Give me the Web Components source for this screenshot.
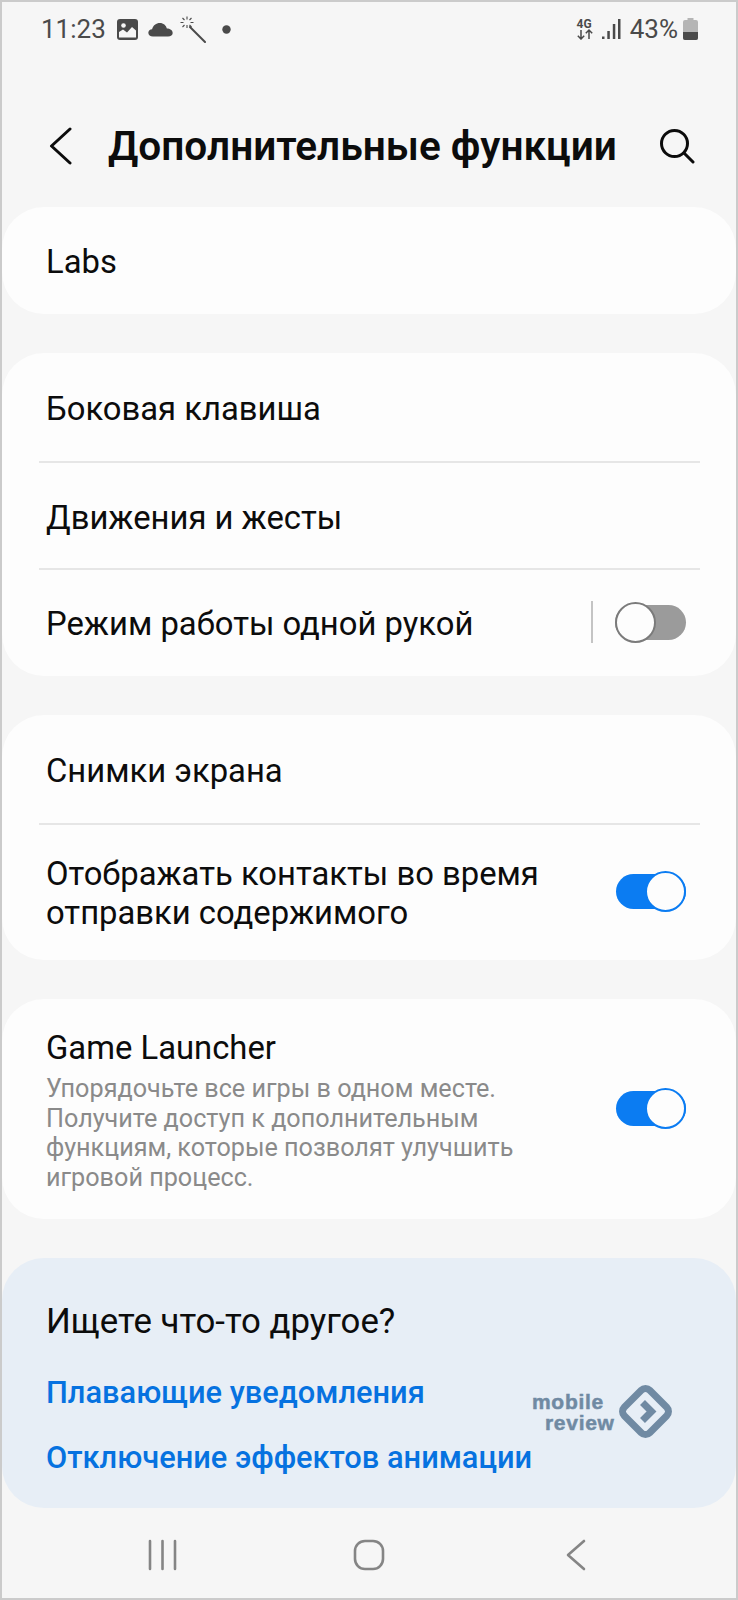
<!DOCTYPE html>
<html lang="ru">
<head>
<meta charset="utf-8">
<title>Дополнительные функции</title>
<style>
  html, body { margin: 0; padding: 0; background: #f6f6f6; }
  body { font-family: Roboto, "Noto Sans", sans-serif; }
</style>
</head>
<body>
<phone-screen>
  <status-bar></status-bar>
  <app-header title="Дополнительные функции"></app-header>
  <settings-card style="margin-top:0">
    <setting-row label="Labs" height="107"></setting-row>
  </settings-card>
  <settings-card>
    <setting-row label="Боковая клавиша" height="110" divider></setting-row>
    <setting-row label="Движения и жесты" height="107" divider></setting-row>
    <setting-row label="Режим работы одной рукой" height="106" toggle="off" split></setting-row>
  </settings-card>
  <settings-card>
    <setting-row label="Снимки экрана" height="110" divider></setting-row>
    <setting-row label="Отображать контакты во время<br>отправки содержимого" height="135" toggle="on"></setting-row>
  </settings-card>
  <settings-card>
    <setting-row label="Game Launcher" height="220" toggle="on"
      sub="Упорядочьте все игры в одном месте.<br>Получите доступ к дополнительным<br>функциям, которые позволят улучшить<br>игровой процесс."></setting-row>
  </settings-card>
  <suggest-card></suggest-card>
  <nav-bar></nav-bar>
</phone-screen>

<script>
class PhoneScreen extends HTMLElement {
    connectedCallback() {
        this.attachShadow({ mode: 'open' });
        this.shadowRoot.innerHTML = `
            <style>
                :host {
                    display: flex;
                    flex-direction: column;
                    box-sizing: border-box;
                    width: 738px;
                    height: 1600px;
                    border: 2px solid #cbcbcb;
                    background: #f6f6f6;
                    overflow: hidden;
                }
            </style>
            <slot></slot>
        `;
    }
}

class StatusBar extends HTMLElement {
    connectedCallback() {
        this.attachShadow({ mode: 'open' });
        this.shadowRoot.innerHTML = `
            <style>
                :host {
                    display: flex;
                    align-items: center;
                    justify-content: space-between;
                    height: 54px;
                    padding: 0 38px 0 39px;
                    color: #4a4a4a;
                    font-size: 26px;
                }
                .side { display: flex; align-items: center; }
                svg { display: block; }
            </style>
            <div class="side">
                <span>11:23</span>
                <svg style="margin-left:11px" width="21" height="21" viewBox="0 0 21 21">
                    <rect x="0" y="0" width="21" height="21" rx="3" fill="#4a4a4a"/>
                    <path d="M2 18.500V13l4-2.500 4 3 5-5.500 4 3.500v7z" fill="#f6f6f6"/>
                    <circle cx="6.500" cy="6.500" r="2.300" fill="#f6f6f6"/>
                </svg>
                <svg style="margin-left:10px" width="25" height="15" viewBox="0 0 26 16">
                    <path d="M5 15.500C2 15.500 0 13.800 0 11.500 0 9.300 1.800 7.800 4 7.700 5 3.500 8.500 1 12.300 1c3.800 0 6.700 2.500 7.500 6 3.200 0 6.200 1.800 6.200 4.700 0 2.300-2 3.800-5 3.800z" fill="#4a4a4a"/>
                </svg>
                <svg style="margin-left:6px" width="27" height="27" viewBox="0 0 27 27" stroke="#4a4a4a" fill="none">
                    <path d="M11 11l15 15" stroke-width="2" stroke-linecap="round"/>
                    <path d="M8 .5v3M8 9v3M1.500 6.500h3M11.500 6.500h3M3.500 2l2 2M10.500 9l2 2M3.500 11l2-2M10.500 4l2-2" stroke-width="1.100"/>
                </svg>
                <svg style="margin-left:16px" width="9" height="9" viewBox="0 0 9 9"><circle cx="4.500" cy="4.500" r="4.200" fill="#4a4a4a"/></svg>
            </div>
            <div class="side">
                <svg width="18" height="22" viewBox="0 0 18 22" fill="none" stroke="#4a4a4a">
                    <text x="0.500" y="9.500" font-family="Roboto" font-size="12" font-weight="700" fill="#4a4a4a" stroke="none">4G</text>
                    <path d="M5 12v9M1.800 17.800L5 21l3.200-3.200M13 21v-9M9.800 15.200L13 12l3.200 3.200" stroke-width="1.500"/>
                </svg>
                <svg style="margin-left:8px" width="19" height="20" viewBox="0 0 19 20" fill="#4a4a4a">
                    <rect x="0" y="17.500" width="2.500" height="2.500"/>
                    <rect x="5.300" y="12" width="2.500" height="8"/>
                    <rect x="10.800" y="5" width="2.500" height="15"/>
                    <rect x="16" y="0" width="2.500" height="20"/>
                </svg>
                <span style="margin-left:9px">43%</span>
                <svg style="margin-left:5px" width="15" height="22" viewBox="0 0 15 22">
                    <path d="M4.500 0h6v2h2.500a2 2 0 0 1 2 2v16a2 2 0 0 1-2 2H2a2 2 0 0 1-2-2V4a2 2 0 0 1 2-2h2.500z" fill="#b5b5b5"/>
                    <path d="M0 14h15v6a2 2 0 0 1-2 2H2a2 2 0 0 1-2-2z" fill="#4a4a4a"/>
                </svg>
            </div>
        `;
    }
}

class AppHeader extends HTMLElement {
    connectedCallback() {
        this.attachShadow({ mode: 'open' });
        this.shadowRoot.innerHTML = `
            <style>
                :host {
                    display: flex;
                    align-items: center;
                    box-sizing: border-box;
                    height: 151px;
                    padding: 29px 0 0 46px;
                    color: #0c0c0c;
                }
                h1 {
                    margin: 0 0 0 36px;
                    font-size: 40.600px;
                    font-weight: 600;
                    white-space: nowrap;
                }
                svg { display: block; flex: none; }
                .search { margin-left: 42px; }
            </style>
            <svg width="24" height="38" viewBox="0 0 24 38" fill="none" stroke="#0c0c0c" stroke-width="3" stroke-linecap="round" stroke-linejoin="round">
                <path d="M22 2L3.500 19 22 36"/>
            </svg>
            <h1>${this.getAttribute('title')}</h1>
            <svg class="search" width="36" height="36" viewBox="0 0 36 36" fill="none" stroke="#0c0c0c" stroke-width="3" stroke-linecap="round">
                <circle cx="15.500" cy="15.500" r="13"/>
                <path d="M25 25l9 9"/>
            </svg>
        `;
    }
}

class SettingsCard extends HTMLElement {
    connectedCallback() {
        this.attachShadow({ mode: 'open' });
        this.shadowRoot.innerHTML = `
            <style>
                :host {
                    display: block;
                    margin-top: 39px;
                    background: #fdfdfd;
                    border-radius: 42px;
                    overflow: hidden;
                }
            </style>
            <slot></slot>
        `;
    }
}

class SettingRow extends HTMLElement {
    connectedCallback() {
        const sub = this.getAttribute('sub');
        const toggle = this.getAttribute('toggle');
        this.attachShadow({ mode: 'open' });
        this.shadowRoot.innerHTML = `
            <style>
                :host {
                    display: flex;
                    align-items: center;
                    position: relative;
                    box-sizing: border-box;
                    height: ${this.getAttribute('height')}px;
                    padding: 0 50px 0 44px;
                    color: #0c0c0c;
                }
                :host([divider])::after {
                    content: '';
                    position: absolute;
                    left: 37px;
                    right: 36px;
                    bottom: 0;
                    height: 2px;
                    background: #e6e6e6;
                }
                .text { flex: 1; min-width: 0; padding-top: 3px; }
                .label { font-size: 32.800px; line-height: 39px; white-space: nowrap; }
                .sub { margin-top: 6px; font-size: 25.200px; line-height: 29.500px; color: #8a8a8a; white-space: nowrap; }
                .split { width: 2px; height: 42px; background: #c4c4c4; margin: 0 22px 2px 0; }
                toggle-switch { margin-bottom: 2px; }
            </style>
            <div class="text">
                <div class="label">${this.getAttribute('label')}</div>
                ${sub ? `<div class="sub">${sub}</div>` : ''}
            </div>
            ${this.hasAttribute('split') ? '<div class="split"></div>' : ''}
            ${toggle ? `<toggle-switch state="${toggle}"></toggle-switch>` : ''}
        `;
    }
}

class ToggleSwitch extends HTMLElement {
    connectedCallback() {
        const on = this.getAttribute('state') === 'on';
        this.attachShadow({ mode: 'open' });
        this.shadowRoot.innerHTML = `
            <style>
                :host {
                    display: flex;
                    align-items: center;
                    justify-content: ${on ? 'flex-end' : 'flex-start'};
                    box-sizing: border-box;
                    width: ${on ? 70 : 71}px;
                    height: 35px;
                    border-radius: 18px;
                    background: ${on ? '#0b7cf2' : '#9b9b9b'};
                }
                .thumb {
                    box-sizing: border-box;
                    width: 41px;
                    height: 41px;
                    margin: -3px 0;
                    border-radius: 50%;
                    background: #fdfdfd;
                    border: 2px solid ${on ? '#0b7cf2' : '#7b7b7b'};
                }
            </style>
            <div class="thumb"></div>
        `;
    }
}

class SuggestCard extends HTMLElement {
    connectedCallback() {
        this.attachShadow({ mode: 'open' });
        this.shadowRoot.innerHTML = `
            <style>
                :host {
                    display: block;
                    position: relative;
                    box-sizing: border-box;
                    height: 250px;
                    margin-top: 39px;
                    padding: 43px 44px 0;
                    background: #e7eef6;
                    border-radius: 42px;
                    color: #0c0c0c;
                }
                .head { font-size: 34.800px; line-height: 40px; }
                a {
                    display: block;
                    font-size: 30.800px;
                    line-height: 38px;
                    font-weight: 500;
                    color: #0672e0;
                    text-decoration: none;
                }
                .first { margin-top: 33px; }
                .second { margin-top: 27px; }
                .logo {
                    position: absolute;
                    left: 530px;
                    top: 127px;
                    display: flex;
                    align-items: center;
                    gap: 4px;
                    color: #708aa3;
                    font-family: "Liberation Sans", Arial, sans-serif;
                    font-weight: 700;
                    font-size: 21px;
                    line-height: 21px;
                    letter-spacing: 0.700px;
                    -webkit-text-stroke: 0.500px #708aa3;
                }
                .logo span { display: block; }
                .logo span + span { margin-left: 13px; }
                svg { display: block; }
            </style>
            <div class="head">Ищете что-то другое?</div>
            <a class="first" href="#">Плавающие уведомления</a>
            <a class="second" href="#">Отключение эффектов анимации</a>
            <div class="logo">
                <div><span>mobile</span><span>review</span></div>
                <svg width="53" height="53" viewBox="0 0 53 53" fill="none" stroke="#708aa3" stroke-width="7">
                    <rect x="8.500" y="8.500" width="36" height="36" rx="6" transform="rotate(45 26.500 26.500)"/>
                    <path d="M23.500 17.500l9 9-9 9"/>
                </svg>
            </div>
        `;
    }
}

class NavBar extends HTMLElement {
    connectedCallback() {
        this.attachShadow({ mode: 'open' });
        this.shadowRoot.innerHTML = `
            <style>
                :host {
                    display: flex;
                    flex: 1;
                    align-items: center;
                    justify-content: space-between;
                    padding: 4px 150px 0 145px;
                }
                svg { display: block; }
                .home { margin-right: 6px; }
            </style>
            <svg width="30" height="32" viewBox="0 0 30 32" stroke="#858585" stroke-width="2.600" stroke-linecap="round" fill="none">
                <path d="M3 2v28M15.500 2v28M28 2v28"/>
            </svg>
            <svg class="home" width="32" height="32" viewBox="0 0 32 32" stroke="#858585" stroke-width="2.600" fill="none">
                <rect x="2" y="2" width="28" height="28" rx="10"/>
            </svg>
            <svg width="20" height="32" viewBox="0 0 20 32" stroke="#858585" stroke-width="2.600" stroke-linecap="round" stroke-linejoin="round" fill="none">
                <path d="M18 2L2 16l16 14"/>
            </svg>
        `;
    }
}

customElements.define('phone-screen', PhoneScreen);
customElements.define('status-bar', StatusBar);
customElements.define('app-header', AppHeader);
customElements.define('settings-card', SettingsCard);
customElements.define('setting-row', SettingRow);
customElements.define('toggle-switch', ToggleSwitch);
customElements.define('suggest-card', SuggestCard);
customElements.define('nav-bar', NavBar);
</script>
</body>
</html>
